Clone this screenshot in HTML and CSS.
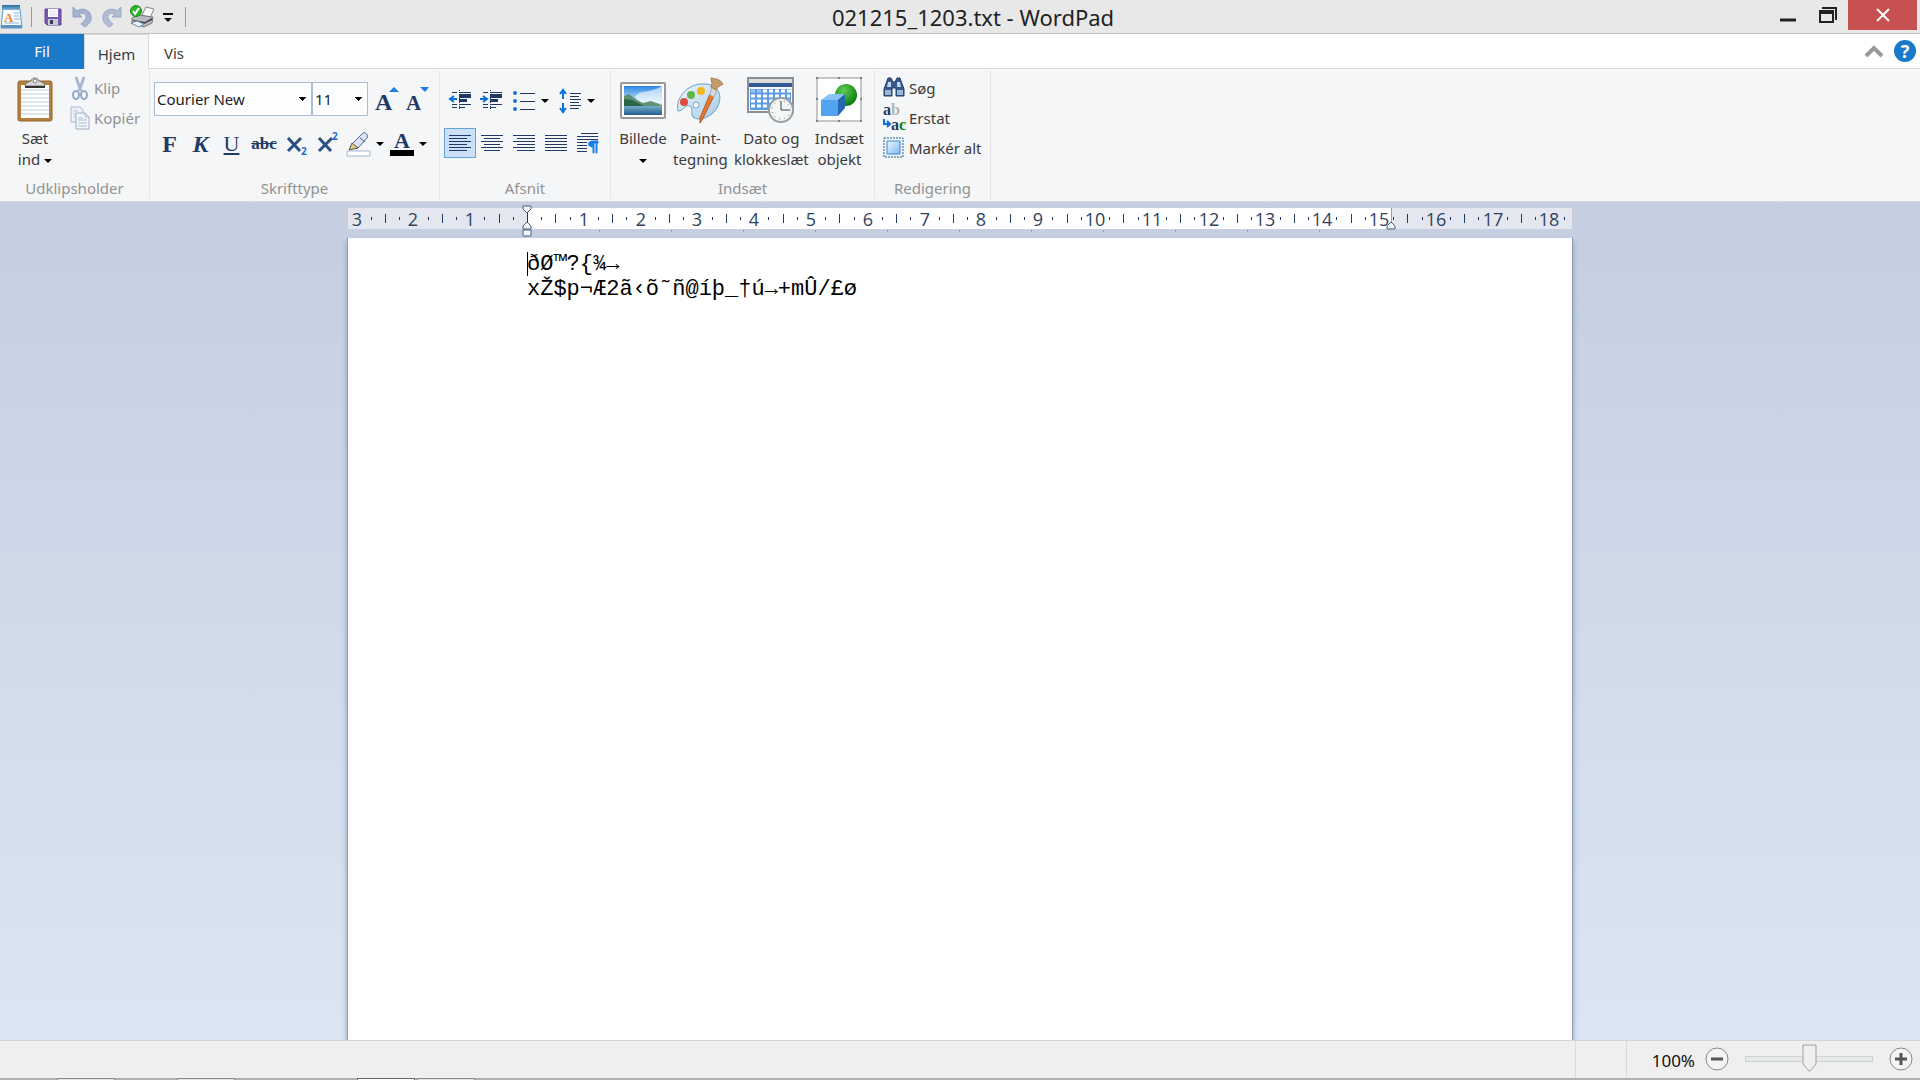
FILE: index.html
```html
<!DOCTYPE html>
<html lang="da">
<head>
    <meta charset="UTF-8">
    <meta name="viewport" content="width=device-width, initial-scale=1.0">
    <title>021215_1203.txt - WordPad</title>
    <link rel="stylesheet" href="styles.css">
</head>
<body>
    <header class="titlebar">
        <div class="quick">
            <svg class="app-icon" width="24" height="26" viewBox="0 0 24 26">
                <defs>
                    <linearGradient id="appTop" x1="0" y1="0" x2="0" y2="1"><stop offset="0" stop-color="#2d6d98"/><stop offset="1" stop-color="#7fb5da"/></linearGradient>
                </defs>
                <path d="M3 5h17l2 19H1z" fill="#f5faff" stroke="#5f9ccc"/>
                <path d="M2 1h18v5H2z" fill="url(#appTop)"/>
                <path d="M1 21h21v3H1z" fill="#5d94c2"/>
                <path d="M14 9h5M14 12h5M14 15h6M5 19h14" stroke="#8fb3d6"/>
                <text x="4" y="18" font-size="13" font-weight="700" fill="#ef8122" class="serif">A</text>
            </svg>
            <span class="sep"></span>
            <button class="tool" aria-label="Gem">
                <svg width="18" height="18" viewBox="0 0 18 18">
                    <path d="M1 1h16v16H3l-2-2z" fill="#7658b4" stroke="#624597"/>
                    <path d="M4 1h10v8H4z" fill="#fff"/>
                    <path d="M5 3h8M5 5h8M5 7h8" stroke="#ddd8ea"/>
                    <path d="M4 11h10v6H4z" fill="#c9cbd3"/>
                    <path d="M6 12h3v4H6z" fill="#3e3560"/>
                </svg>
            </button>
            <button class="tool" aria-label="Fortryd">
                <svg width="20" height="22" viewBox="0 0 20 22"><path d="M1 1v10h9L7 8c5-2 8 1 7 4-1 3-3 4-5 6l4 3c4-3 7-6 6-11C18 4 10 1 5 5z" fill="#a6b5cf" stroke="#8fa2c2"/></svg>
            </button>
            <button class="tool" aria-label="Annuller fortryd">
                <svg width="20" height="22" viewBox="0 0 20 22"><path d="M19 1v10h-9l3-3c-5-2-8 1-7 4 1 3 3 4 5 6l-4 3C3 18 0 15 1 10 2 4 10 1 15 5z" fill="#b0bdd2" stroke="#9baac3"/></svg>
            </button>
            <button class="tool" aria-label="Hurtig udskrivning">
                <svg width="25" height="24" viewBox="0 0 25 24">
                    <path d="M12 10l4-8 8 2-4 9z" fill="#f7f7f7" stroke="#888"/>
                    <path d="M2 13l6-3 15 2-1 6-8 4-12-4z" fill="#b9bcc0" stroke="#777"/>
                    <path d="M3 15l12 2 7-4v2l-8 4-11-3z" fill="#3b3f44"/>
                    <path d="M1 18l6-2 7 3-5 3z" fill="#eaf4fb" stroke="#6c8ea5"/>
                    <circle cx="6" cy="6" r="5.500" fill="#2db52b" stroke="#168d19"/>
                    <path d="M3 6l2 3 4-6" fill="none" stroke="#fff" stroke-width="2"/>
                </svg>
            </button>
            <button class="tool" aria-label="Tilpas">
                <svg width="10" height="9" viewBox="0 0 10 9"><path d="M0 1h10" stroke="#111" stroke-width="2"/><path d="M1 5h8L5 9z" fill="#111"/></svg>
            </button>
            <span class="sep"></span>
        </div>
        <h1>021215_1203.txt - WordPad</h1>
        <div class="window-buttons">
            <button class="min" aria-label="Minimer"><svg width="16" height="24"><path d="M0 20h16" stroke="#222" stroke-width="3"/></svg></button>
            <button class="max" aria-label="Gendan"><svg width="18" height="16"><path d="M3 1h14v12" fill="none" stroke="#222" stroke-width="2"/><path d="M0 3h15v13H0zM2 7v7h11V7z" fill="#222" fill-rule="evenodd"/></svg></button>
            <button class="close" aria-label="Luk"><svg width="14" height="12"><path d="M1 0l12 12M13 0L1 12" stroke="#fff" stroke-width="2"/></svg></button>
        </div>
    </header>

    <nav class="tabs">
        <button class="tab file">Fil</button>
        <button class="tab active">Hjem</button>
        <button class="tab">Vis</button>
        <span class="grow"></span>
        <button class="tool" aria-label="Minimer båndet"><svg width="18" height="14"><path d="M1 12l8-8 8 8" fill="none" stroke="#999" stroke-width="4"/></svg></button>
        <button class="help" aria-label="Hjælp">?</button>
    </nav>

    <main class="ribbon">
        <section class="group clipboard">
            <div class="group-body">
                <button class="big">
                    <svg width="36" height="46" viewBox="0 0 36 46">
                        <rect x="1" y="4" width="34" height="40" rx="2" fill="#b5803f" stroke="#8f6229"/>
                        <path d="M4 8h28v33H4z" fill="#fff"/>
                        <path d="M4 13h28M4 17h28M4 21h28M4 25h28M4 29h28M4 33h28M4 37h28" stroke="#bfd0de"/>
                        <path d="M8 9c0-3 4-4 6-5 0-4 8-4 8 0 2 1 6 2 6 5z" fill="#d9d9d9" stroke="#777"/>
                        <path d="M8 10h20" stroke="#333" stroke-width="2"/>
                        <circle cx="18" cy="4" r="2" fill="#fff" stroke="#777"/>
                    </svg>
                    <span>Sæt<br>ind <i class="arrow"></i></span>
                </button>
                <div class="stack">
                    <button class="small" disabled>
                        <svg width="20" height="24" viewBox="0 0 20 24"><path d="M6 1l5 14M14 1L9 15" stroke="#a9b8d0" stroke-width="3"/><ellipse cx="6" cy="19" rx="3" ry="4" fill="none" stroke="#93a9cb" stroke-width="2"/><ellipse cx="14" cy="19" rx="3" ry="4" fill="none" stroke="#93a9cb" stroke-width="2"/></svg>
                        Klip
                    </button>
                    <button class="small" disabled>
                        <svg width="20" height="24" viewBox="0 0 20 24"><path d="M1 1h9l3 3v12H1z" fill="#eef2f8" stroke="#a9b9d3"/><path d="M3 5h5M3 8h6M3 11h6" stroke="#b9c6dc"/><path d="M6 7h9l4 4v12H6z" fill="#f6f8fc" stroke="#9badcb"/><path d="M15 7v4h4M8 12h5M8 14h9M8 17h9M8 20h9" fill="none" stroke="#a9b9d3"/></svg>
                        Kopiér
                    </button>
                </div>
            </div>
            <h2>Udklipsholder</h2>
        </section>

        <section class="group font">
            <div class="group-body rows">
                <div class="row">
                    <select class="font-name" aria-label="Skrifttype"><option>Courier New</option></select>
                    <select class="font-size" aria-label="Skriftstørrelse"><option>11</option></select>
                    <button class="tool grow-font" aria-label="Forstør skrifttype"><svg width="26" height="26"><text x="0" y="24" font-size="24" class="glyph">A</text><path d="M14 6l5-5 5 5z" fill="#1a7ee6"/></svg></button>
                    <button class="tool shrink-font" aria-label="Formindsk skrifttype"><svg width="26" height="26"><text x="0" y="24" font-size="21" class="glyph">A</text><path d="M14 1h9l-4 5z" fill="#1a7ee6"/></svg></button>
                </div>
                <div class="row format">
                    <button class="tool glyph-b" aria-label="Fed">F</button>
                    <button class="tool glyph-i" aria-label="Kursiv">K</button>
                    <button class="tool glyph-u" aria-label="Understreget">U</button>
                    <button class="tool glyph-s" aria-label="Gennemstreget">abc</button>
                    <button class="tool" aria-label="Sænket skrift"><svg width="22" height="24"><path d="M2 6l12 13M15 6L2 19" stroke="#2b5080" stroke-width="3"/><text x="15" y="23" class="tiny">2</text></svg></button>
                    <button class="tool" aria-label="Hævet skrift"><svg width="22" height="24"><path d="M2 6l12 13M15 6L2 19" stroke="#2b5080" stroke-width="3"/><text x="15" y="8" class="tiny">2</text></svg></button>
                    <button class="tool split" aria-label="Fremhævningsfarve"><svg width="26" height="26"><path d="M6 13L16 3c2-3 7 0 5 4l-9 10z" fill="#dce4f1" stroke="#4e6891"/><path d="M14 7l5 4" stroke="#4e6891"/><path d="M3 19l3-7 6 5z" fill="#e2cb81" stroke="#555"/><path d="M1 20h23v5H1z" fill="#fff" stroke="#a5b6d1"/></svg><i class="arrow"></i></button>
                    <button class="tool split" aria-label="Skriftfarve"><svg width="26" height="26"><text x="5" y="17" font-size="22" class="glyph">A</text><path d="M1 19h24v6H1z"/></svg><i class="arrow"></i></button>
                </div>
            </div>
            <h2>Skrifttype</h2>
        </section>

        <section class="group paragraph">
            <div class="group-body rows">
                <div class="row para">
                    <button class="tool" aria-label="Formindsk indrykning"><svg width="24" height="24"><path class="line" d="M3 3h5M10 3h12M3 15h5M10 15h12M3 18h5M10 18h6"/><path d="M10 5h12v4H10zM10 10h8v3h-8z" fill="#1f3864"/><path class="line" d="M10 1v20" stroke-dasharray="1 1"/><path class="blue" d="M8 10H1M5 7l-4 3 4 3"/></svg></button>
                    <button class="tool" aria-label="Forøg indrykning"><svg width="24" height="24"><path class="line" d="M3 3h5M10 3h12M3 15h5M10 15h12M3 18h5M10 18h6"/><path d="M10 5h12v4H10zM10 10h8v3h-8z" fill="#1f3864"/><path class="line" d="M10 1v20" stroke-dasharray="1 1"/><path class="blue" d="M0 10h7M3 7l4 3-4 3"/></svg></button>
                    <button class="tool split" aria-label="Punkttegn"><svg width="26" height="24"><path class="line" d="M9 4h15M9 12h15M9 20h15"/><g fill="#1673df"><circle cx="4" cy="4" r="2"/><circle cx="4" cy="12" r="2"/><circle cx="4" cy="20" r="2"/></g></svg><i class="arrow"></i></button>
                    <button class="tool split spacing" aria-label="Linjeafstand"><svg width="24" height="24"><path class="line" d="M11 4h11M11 7h9M11 10h11M11 13h9M11 16h11M11 19h9"/><path class="blue" d="M4 2v8M1 5l3-4 3 4M4 14v8M1 19l3 4 3-4"/></svg><i class="arrow"></i></button>
                </div>
                <div class="row align">
                    <button class="tool selected" aria-label="Venstrejuster"><svg width="24" height="20"><path class="line" d="M1 2h22M1 5h18M1 8h22M1 11h18M1 14h22M1 17h18"/></svg></button>
                    <button class="tool" aria-label="Centrer"><svg width="24" height="20"><path class="line" d="M1 2h22M4 5h16M1 8h22M4 11h16M1 14h22M4 17h16"/></svg></button>
                    <button class="tool" aria-label="Højrejuster"><svg width="24" height="20"><path class="line" d="M1 2h22M5 5h18M1 8h22M5 11h18M1 14h22M5 17h18"/></svg></button>
                    <button class="tool" aria-label="Lige margener"><svg width="24" height="20"><path class="line" d="M1 2h22M1 5h22M1 8h22M1 11h22M1 14h22M1 17h22"/></svg></button>
                    <button class="tool" aria-label="Afsnit"><svg width="24" height="22"><path class="line" d="M5 1h17M1 4h21M1 7h21M1 10h10M1 13h10M1 16h10M1 19h10"/><path d="M22 9v2h-1v10h-1V11h-2v10h-1v-6c-6 0-6-6 0-6z" fill="#1a7ee6" stroke="#1a7ee6"/></svg></button>
                </div>
            </div>
            <h2>Afsnit</h2>
        </section>

        <section class="group insert">
            <div class="group-body">
                <button class="big">
                    <svg width="48" height="46" viewBox="0 0 48 46">
                        <defs>
                            <linearGradient id="sky" x1="0" y1="0" x2="0" y2="1"><stop offset="0" stop-color="#2e87e4"/><stop offset="1" stop-color="#d9f2ff"/></linearGradient>
                            <linearGradient id="sea" x1="0" y1="0" x2="0" y2="1"><stop offset="0" stop-color="#7bb6cf"/><stop offset="1" stop-color="#235f8f"/></linearGradient>
                        </defs>
                        <rect x="2" y="6" width="44" height="35" rx="1" fill="#fff" stroke="#999" stroke-width="2"/>
                        <path d="M5 9h38v18H5z" fill="url(#sky)"/>
                        <path d="M5 28h38v10H5z" fill="url(#sea)"/>
                        <path d="M16 20c5-8 14-3 27-11v17H22z" fill="#fff" opacity=".6"/>
                        <path d="M5 19l5-2 8 6 6 3 8-2 11 4v1H5z" fill="#5d9171"/>
                        <path d="M5 22l8 1 12 6H5z" fill="#2d6546"/>
                    </svg>
                    <span>Billede<br><i class="arrow"></i></span>
                </button>
                <button class="big">
                    <svg width="48" height="46" viewBox="0 0 48 46">
                        <defs><linearGradient id="pal" x1="0" y1="0" x2="1" y2="1"><stop offset="0" stop-color="#eef8fe"/><stop offset="1" stop-color="#a5cbe6"/></linearGradient></defs>
                        <path d="M2 34C-1 21 12 6 28 7c14 0 19 11 14 22-5 11-19 16-25 11-3-4 1-9-3-11-5-2-8 6-12 5z" fill="url(#pal)" stroke="#6b9dc0"/>
                        <circle cx="8" cy="25" r="4" fill="#e04a3b"/><circle cx="15" cy="18" r="4" fill="#61b54e"/><circle cx="25" cy="14" r="4" fill="#f6b31a"/>
                        <circle cx="20" cy="28" r="3" fill="#f5f6f8" stroke="#7ba5c3"/>
                        <path d="M34 17l4 2-12 24-2 3v-5z" fill="#e8792a" stroke="#b95817"/>
                        <path d="M36 10l5 3-3 7-4-2z" fill="#d9d9d9" stroke="#aaa"/>
                        <path d="M35 1c5 1 9 1 12 6-3 2-6 3-7 6l-5-3c2-4 0-6 0-9z" fill="#c49b6b" stroke="#a57d50"/>
                    </svg>
                    <span>Paint-<br>tegning</span>
                </button>
                <button class="big">
                    <svg width="48" height="46" viewBox="0 0 48 46">
                        <path d="M1 1h45v34H1z" fill="#f4f8fc" stroke="#8a8f96" stroke-width="2"/>
                        <path d="M2 2h43v4H2z" fill="#dcdcdc"/><path d="M2 6h43v4H2z" fill="#335a92"/>
                        <path d="M3 12h41v21H3z" fill="#5d9be5"/>
                        <path d="M16 14h28M4 19h39M4 24h39M4 29h39" stroke="#fff" stroke-width="3" stroke-dasharray="4 2"/>
                        <path d="M4 14h11" stroke="#9cc2f2" stroke-width="3" stroke-dasharray="4 2"/>
                        <circle cx="34" cy="33" r="12" fill="#f4f5f5" stroke="#9b9fa3" stroke-width="2"/>
                        <circle cx="34" cy="33" r="9" fill="none" stroke="#777" stroke-dasharray="1 4"/>
                        <path d="M34 24v9h8" fill="none" stroke="#345"/>
                    </svg>
                    <span>Dato og<br>klokkeslæt</span>
                </button>
                <button class="big">
                    <svg width="48" height="46" viewBox="0 0 48 46">
                        <defs><radialGradient id="ball" cx=".4" cy=".3" r=".7"><stop offset="0" stop-color="#63cf53"/><stop offset="1" stop-color="#087c0c"/></radialGradient></defs>
                        <path d="M2 1h44v43H2z" fill="#fff" stroke="#929292"/>
                        <path d="M1 0h2v2H1zM45 0h2v2h-2zM1 43h2v2H1zM45 43h2v2h-2zM23 0h2v2h-2zM23 43h2v2h-2zM1 21h2v2H1zM45 21h2v2h-2z" fill="#808080"/>
                        <circle cx="31" cy="18" r="11" fill="url(#ball)"/>
                        <path d="M6 23h17v16H6z" fill="#54a3ee"/><path d="M6 23l8-6h16l-7 6z" fill="#8ac3fa"/><path d="M23 23l7-6v14l-7 8z" fill="#2567b5"/>
                    </svg>
                    <span>Indsæt<br>objekt</span>
                </button>
            </div>
            <h2>Indsæt</h2>
        </section>

        <section class="group editing">
            <div class="group-body">
                <div class="stack">
                    <button class="small">
                        <svg width="22" height="22" viewBox="0 0 22 22"><path d="M4 4l1-3h3l2 4h2l2-4h3l1 3 3 8v7h-8v-8h-4v8H1v-7z" fill="#355a8f" stroke="#203d68"/><path d="M2 13h6v5H2zm12 0h6v5h-6z" fill="#9fb7d7"/><path d="M5 5h3v5H4zm9 0h3l1 5h-4z" fill="#c5d4e9"/></svg>
                        Søg
                    </button>
                    <button class="small replace">
                        <svg width="24" height="28" viewBox="0 0 24 28"><text x="0" y="11" class="letters">a<tspan fill="#b5b5b5">b</tspan></text><text x="8" y="26" class="letters">a<tspan fill="#12801c">c</tspan></text><path class="blue" d="M1 15v5h6M4 17l3 3-3 3"/></svg>
                        Erstat
                    </button>
                    <button class="small">
                        <svg width="22" height="22" viewBox="0 0 22 22"><defs><linearGradient id="all" x1="0" y1="0" x2="1" y2="1"><stop offset="0" stop-color="#f0f8ff"/><stop offset="1" stop-color="#7cb8f8"/></linearGradient></defs><path d="M1 1h19v19H1z" fill="none" stroke="#1d5f9f" stroke-dasharray="2 1"/><path d="M4 4h13v13H4z" fill="url(#all)" stroke="#3b87cf"/></svg>
                        Markér alt
                    </button>
                </div>
            </div>
            <h2>Redigering</h2>
        </section>
    </main>

    <div class="workspace">
        <div class="ruler">
            <svg id="ruler" width="1224" height="36"></svg>
        </div>
        <article class="page" contenteditable="true" spellcheck="false"><p class="current">ðØ™?{¾→</p><p>xŽ$p¬Æ2ã‹õ˜ñ@íþ_†ú→+mÛ/£ø</p></article>
    </div>

    <footer class="statusbar">
        <span class="cell"></span>
        <div class="zoom">
            <label for="zoom">100%</label>
            <button class="round" aria-label="Zoom ud"><svg width="24" height="24"><circle cx="12" cy="12" r="11" fill="#f4f4f4" stroke="#888"/><path d="M6 12h12" stroke="#555" stroke-width="3"/></svg></button>
            <input type="range" id="zoom" min="0" max="200" value="100">
            <button class="round" aria-label="Zoom ind"><svg width="24" height="24"><circle cx="12" cy="12" r="11" fill="#f4f4f4" stroke="#888"/><path d="M6 12h12M12 6v12" stroke="#555" stroke-width="3"/></svg></button>
        </div>
    </footer>
    <div class="taskbar"><span></span><span></span><span class="open"></span><span></span></div>

    <script src="ruler.js"></script>
</body>
</html>
```
FILE: styles.css
```css
* {
    box-sizing: border-box;
}
body {
    margin: 0;
    height: 100vh;
    display: flex;
    flex-direction: column;
    overflow: hidden;
    font-family: "Noto Sans", "Open Sans", sans-serif;
    font-size: 15px;
    color: #3b3b3b;
    background: #f5f6f7;
}
button {
    font: inherit;
    color: inherit;
    border: 0;
    padding: 0;
    background: none;
}
svg {
    display: block;
    flex: none;
    overflow: visible;
}
h1, h2, p {
    margin: 0;
    font-weight: 400;
}
.serif, .glyph {
    font-family: "Liberation Serif", serif;
}
.glyph {
    fill: #1f3a64;
    font-weight: 700;
}
.line {
    stroke: #1f3864;
    shape-rendering: crispEdges;
}
.blue {
    fill: none;
    stroke: #0b70dc;
    stroke-width: 2;
}

/* title bar */
.titlebar {
    display: grid;
    grid-template-columns: 1fr auto 1fr;
    height: 34px;
    background: #e8e8e8;
    border-bottom: 1px solid #c3c3c3;
}
.titlebar h1 {
    padding-left: 26px;
    font-size: 22px;
    line-height: 34px;
    color: #222;
}
.quick {
    display: flex;
    align-items: center;
    gap: 10px;
}
.app-icon {
    margin-right: -3px;
}
.sep {
    width: 1px;
    height: 20px;
    background: #999;
}
.quick .sep:first-of-type {
    margin-right: 2px;
}
.quick .sep:last-child {
    margin-left: 2px;
}
.quick .tool:nth-of-type(n+4) {
    margin-left: -2px;
}
.window-buttons {
    display: flex;
    justify-content: flex-end;
    padding-right: 3px;
}
.window-buttons button {
    display: flex;
    justify-content: center;
    height: 30px;
}
.min {
    width: 40px;
}
.max {
    width: 40px;
    padding-top: 7px;
}
.window-buttons .close {
    width: 69px;
    align-items: center;
    background: #c75050;
}

/* tabs */
.tabs {
    display: flex;
    align-items: center;
    height: 35px;
    background: #fff;
    border-bottom: 1px solid #dadbdc;
    padding-right: 4px;
}
.tab {
    width: 50px;
    height: 35px;
    padding-top: 4px;
    flex: none;
}
.file {
    width: 84px;
    padding: 0;
    color: #fff;
    background: #1979ca;
}
.active {
    width: 65px;
    background: #f5f6f7;
    border: 1px solid #dadbdc;
    border-bottom: 0;
}
.grow {
    flex: 1;
}
.help {
    width: 22px;
    height: 22px;
    margin-left: 11px;
    border-radius: 50%;
    background: #1979ca;
    color: #fff;
    font-size: 18px;
    font-weight: 700;
    line-height: 22px;
}

/* ribbon */
.ribbon {
    display: flex;
    height: 133px;
    padding: 2px 0;
    border-bottom: 1px solid #dadbdc;
}
.group {
    display: flex;
    flex-direction: column;
    border-right: 1px solid #e2e3e4;
}
.group-body {
    display: flex;
    flex: 1;
    padding-top: 2px;
}
.group h2 {
    font-size: 15px;
    line-height: 22px;
    text-align: center;
    color: #929292;
}
.clipboard { width: 150px; }
.font { width: 290px; }
.paragraph { width: 171px; }
.insert { width: 264px; }
.editing { width: 116px; }
.arrow {
    display: inline-block;
    border: 4px solid transparent;
    border-top-color: #000;
    border-bottom: 0;
    vertical-align: middle;
}
.big {
    display: flex;
    flex-direction: column;
    align-items: center;
    gap: 5px;
    line-height: 21px;
    padding-top: 4px;
    white-space: nowrap;
}
.clipboard .big {
    width: 70px;
}
.insert .group-body {
    justify-content: space-between;
    padding-left: 8px;
    padding-right: 10px;
}
.stack {
    display: flex;
    flex-direction: column;
}
.small {
    display: flex;
    align-items: center;
    gap: 4px;
    height: 30px;
    white-space: nowrap;
}
.small:disabled {
    color: #929292;
}
.replace {
    gap: 2px;
}
.editing .stack {
    padding-left: 8px;
}
.rows {
    flex-direction: column;
}
.row {
    display: flex;
    align-items: center;
    height: 46px;
}
.font .row {
    padding-left: 4px;
}
.group .rows {
    padding-top: 5px;
}
select {
    appearance: none;
    height: 34px;
    padding: 0 2px;
    font: inherit;
    color: #1e1e1e;
    background-color: #fcfdff;
    background-image: linear-gradient(45deg, transparent 50%, #000 50%), linear-gradient(135deg, #000 50%, transparent 50%);
    background-position: right 8px center, right 4px center;
    background-size: 4px 4px;
    background-repeat: no-repeat;
    border: 1px solid #abbcd5;
    border-radius: 0;
}
.font-name { width: 158px; }
.font-size { width: 56px; }
.grow-font { margin-left: 7px; }
.shrink-font { margin-left: 5px; }
.tool {
    display: flex;
    align-items: center;
    justify-content: center;
}
.split {
    gap: 4px;
}
.format {
    height: 44px;
    font-family: "Liberation Serif", serif;
    color: #1f3a64;
    font-size: 24px;
}
.format .tool {
    width: 31px;
}
.format .glyph-s {
    width: 34px;
}
.format .split {
    width: 43px;
}
.format .split:first-of-type {
    margin-left: 6px;
}
.glyph-b { font-weight: 700; }
.glyph-i { font-style: italic; font-weight: 700; }
.glyph-u { font-size: 22px; text-decoration: underline; }
.glyph-s { text-decoration: line-through; font-size: 17px; font-weight: 700; }
.tiny {
    font: 700 10px "Open Sans", sans-serif;
    fill: #1a6fd0;
}
.letters {
    font: 700 16px/1 "Liberation Serif", serif;
    fill: #1f3a64;
}
.para {
    gap: 7px;
    padding-left: 9px;
    padding-top: 3px;
}
.spacing {
    margin-left: 3px;
}
.align {
    height: 42px;
    padding-left: 4px;
}
.align .tool {
    width: 32px;
    height: 30px;
}
.align .selected {
    background: #cce0f7;
    border: 1px solid #62a2e4;
}

/* document */
.workspace {
    flex: 1;
    min-height: 0;
    display: flex;
    flex-direction: column;
    align-items: center;
    background: linear-gradient(#c5cee0, #dce6f2);
}
.ruler {
    height: 36px;
    flex: none;
}
.ruler rect {
    fill: #fff;
}
.ruler .margin {
    fill: #e4e7ef;
}
.ruler path {
    stroke: #1f3864;
    shape-rendering: crispEdges;
}
.ruler .tab-stop {
    stroke: #8f9db8;
}
.ruler .marker {
    fill: #f4f6fa;
    stroke: #4a5f80;
    shape-rendering: auto;
}
.ruler text {
    font-family: "Open Sans", sans-serif;
    font-size: 18px;
    fill: #31425e;
    text-anchor: middle;
}
.page {
    flex: 1;
    width: 1226px;
    padding: 14px 179px;
    background: #fff;
    border: 1px solid #8d9ab5;
    border-width: 0 1px;
    box-shadow: 0 4px 6px #8c9cbd;
    font-family: "Liberation Mono", monospace;
    font-size: 22px;
    line-height: 25px;
    color: #000;
    outline: 0;
}
.current {
    position: relative;
}
.current::before {
    content: "";
    position: absolute;
    top: 0;
    left: 0;
    width: 1px;
    height: 24px;
    background: #000;
}

/* status bar */
.statusbar {
    display: flex;
    justify-content: flex-end;
    height: 38px;
    background: #efefef;
    border-top: 1px solid #d4d4d4;
}
.cell {
    width: 52px;
    border: 1px solid #d9d9d9;
    border-width: 0 1px;
}
.zoom {
    display: flex;
    align-items: center;
    padding: 0 7px 2px 25px;
}
.zoom label {
    padding-top: 4px;
    font-size: 17px;
    color: #111;
    margin-right: 10px;
}
.zoom input {
    appearance: none;
    width: 128px;
    height: 28px;
    margin: 0 16px;
    background: none;
}
.zoom input::-webkit-slider-runnable-track {
    height: 6px;
    background: #e7eaea;
    border: 1px solid #d0d3d3;
}
.zoom input::-webkit-slider-thumb {
    appearance: none;
    width: 15px;
    height: 28px;
    margin-top: -13px;
    background: url("data:image/svg+xml,%3Csvg xmlns='http://www.w3.org/2000/svg' width='15' height='28'%3E%3Cpath d='M1 1h13v19l-6 7h-1l-6-7z' fill='%23efefef' stroke='%23a0a0a0'/%3E%3C/svg%3E");
}

/* top edge of the task bar */
.taskbar {
    display: flex;
    gap: 62px;
    height: 2px;
    padding-left: 57px;
    background: #b0b0b0;
}
.taskbar span {
    width: 58px;
    background: #e4e4e4;
    border: 1px solid #888;
    border-bottom: 0;
}
.taskbar .open {
    margin-left: 60px;
    margin-right: -60px;
    background: #fff;
    border-color: #666;
}
```
FILE: ruler.js
```js
const svg = document.getElementById('ruler');
const width = 1224;
const zero = 179;       // left margin
const right = 1043;     // right margin
const cm = 56.8;

let out = `<rect class="margin" x="0" y="6" width="${width}" height="21"/>
    <rect x="${zero}" y="6" width="${right - zero}" height="21"/>`;

// numbers on the whole centimetres, ticks on the quarters
for (let q = -12; q <= 73; q++) {
    const x = Math.round(zero + q * cm / 4);
    if (q % 4 === 0) {
        if (q !== 0) out += `<text x="${x}" y="24">${Math.abs(q / 4)}</text>`;
    } else if (q % 2 === 0) {
        out += `<path d="M${x} 12v9"/>`;
    } else {
        out += `<path d="M${x} 15v3"/>`;
    }
}

// default tab stops
for (let x = zero + 72; x < right; x += 72) {
    out += `<path class="tab-stop" d="M${x} 28v2"/>`;
}

// indent markers
out += `<path d="M${zero} 11v11"/>
    <path class="marker" d="M${zero - 4} 4h8v3l-4 4-4-4z"/>
    <path class="marker" d="M${zero - 4} 27v-3l4-4 4 4v3z"/>
    <path class="marker" d="M${zero - 4} 28h8v6h-8z"/>
    <path class="tab-stop" d="M${right} 6v16"/>
    <path class="marker" d="M${right - 4} 27v-3l4-4 4 4v3z"/>`;

svg.innerHTML = out;
```
